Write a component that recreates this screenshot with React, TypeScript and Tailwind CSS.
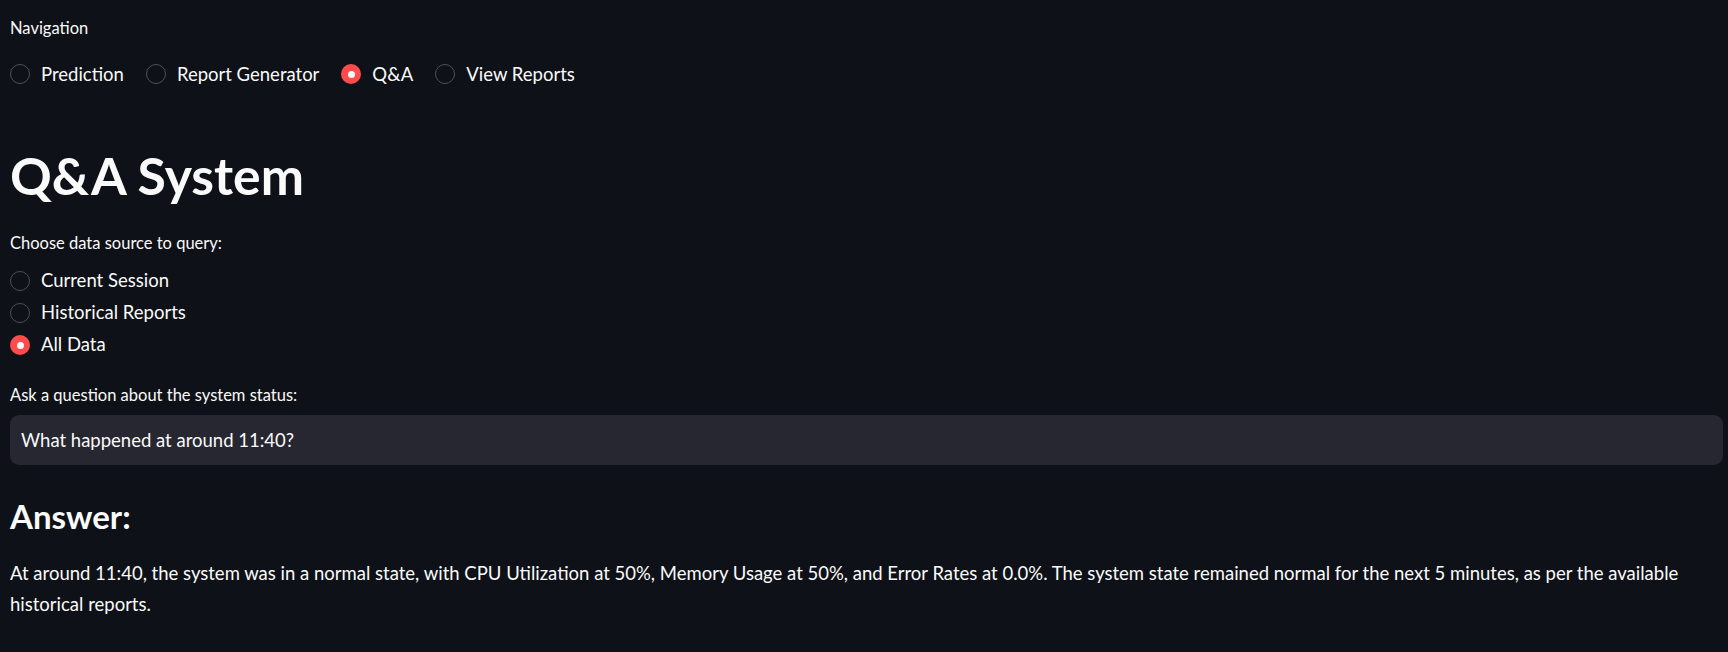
import { useState } from "react";

const navOptions = ["Prediction", "Report Generator", "Q&A", "View Reports"];
const sourceOptions = ["Current Session", "Historical Reports", "All Data"];

function RadioDot({ checked }: { checked: boolean }) {
  return checked ? (
    <span className="flex h-[20px] w-[20px] shrink-0 items-center justify-center rounded-full bg-[#ff4b4b]">
      <span className="h-[7px] w-[7px] rounded-full bg-[#fafafa]" />
    </span>
  ) : (
    <span className="h-[20px] w-[20px] shrink-0 rounded-full border border-[#4e5059] bg-[#0e1117]" />
  );
}

export default function App() {
  const [page, setPage] = useState("Q&A");
  const [source, setSource] = useState("All Data");
  const [question, setQuestion] = useState("What happened at around 11:40?");

  return (
    <main
      className="min-h-screen bg-[#0e1117] pl-[10px] pr-[5px] text-[#fafafa]"
      style={{ fontFamily: "Lato, 'Noto Sans', sans-serif" }}
    >
      <p className="pt-[18px] text-[16.5px] leading-[20px]">Navigation</p>

      <div className="mt-[24px] flex h-[24px] items-center gap-[22px]">
        {navOptions.map((opt) => (
          <label
            key={opt}
            className="flex cursor-pointer items-center gap-[11px] text-[18.5px] leading-[24px]"
            onClick={() => setPage(opt)}
          >
            <RadioDot checked={page === opt} />
            <span>{opt}</span>
          </label>
        ))}
      </div>

      <h1 className="mt-[59px] text-[51.7px] font-bold leading-[60px]">Q&amp;A System</h1>

      <p className="mt-[28px] text-[16.5px] leading-[20px]">Choose data source to query:</p>

      <div className="mt-[12px] flex flex-col">
        {sourceOptions.map((opt) => (
          <label
            key={opt}
            className="flex h-[32px] cursor-pointer items-center gap-[11px] text-[18.5px]"
            onClick={() => setSource(opt)}
          >
            <RadioDot checked={source === opt} />
            <span>{opt}</span>
          </label>
        ))}
      </div>

      <p className="mt-[24px] text-[16.5px] leading-[20px]">Ask a question about the system status:</p>

      <input
        value={question}
        onChange={(e) => setQuestion(e.target.value)}
        className="mt-[10px] h-[50px] w-full rounded-[9px] bg-[#262730] px-[11px] text-[18.5px] text-[#fafafa] outline-none"
      />

      <h3 className="mt-[31px] text-[33px] font-bold leading-[40px]">Answer:</h3>

      <p className="mt-[22px] text-[18.5px] leading-[31px]">
        At around 11:40, the system was in a normal state, with CPU Utilization at 50%, Memory Usage at 50%, and
        Error Rates at 0.0%. The system state remained normal for the next 5 minutes, as per the available
        historical reports.
      </p>
    </main>
  );
}
